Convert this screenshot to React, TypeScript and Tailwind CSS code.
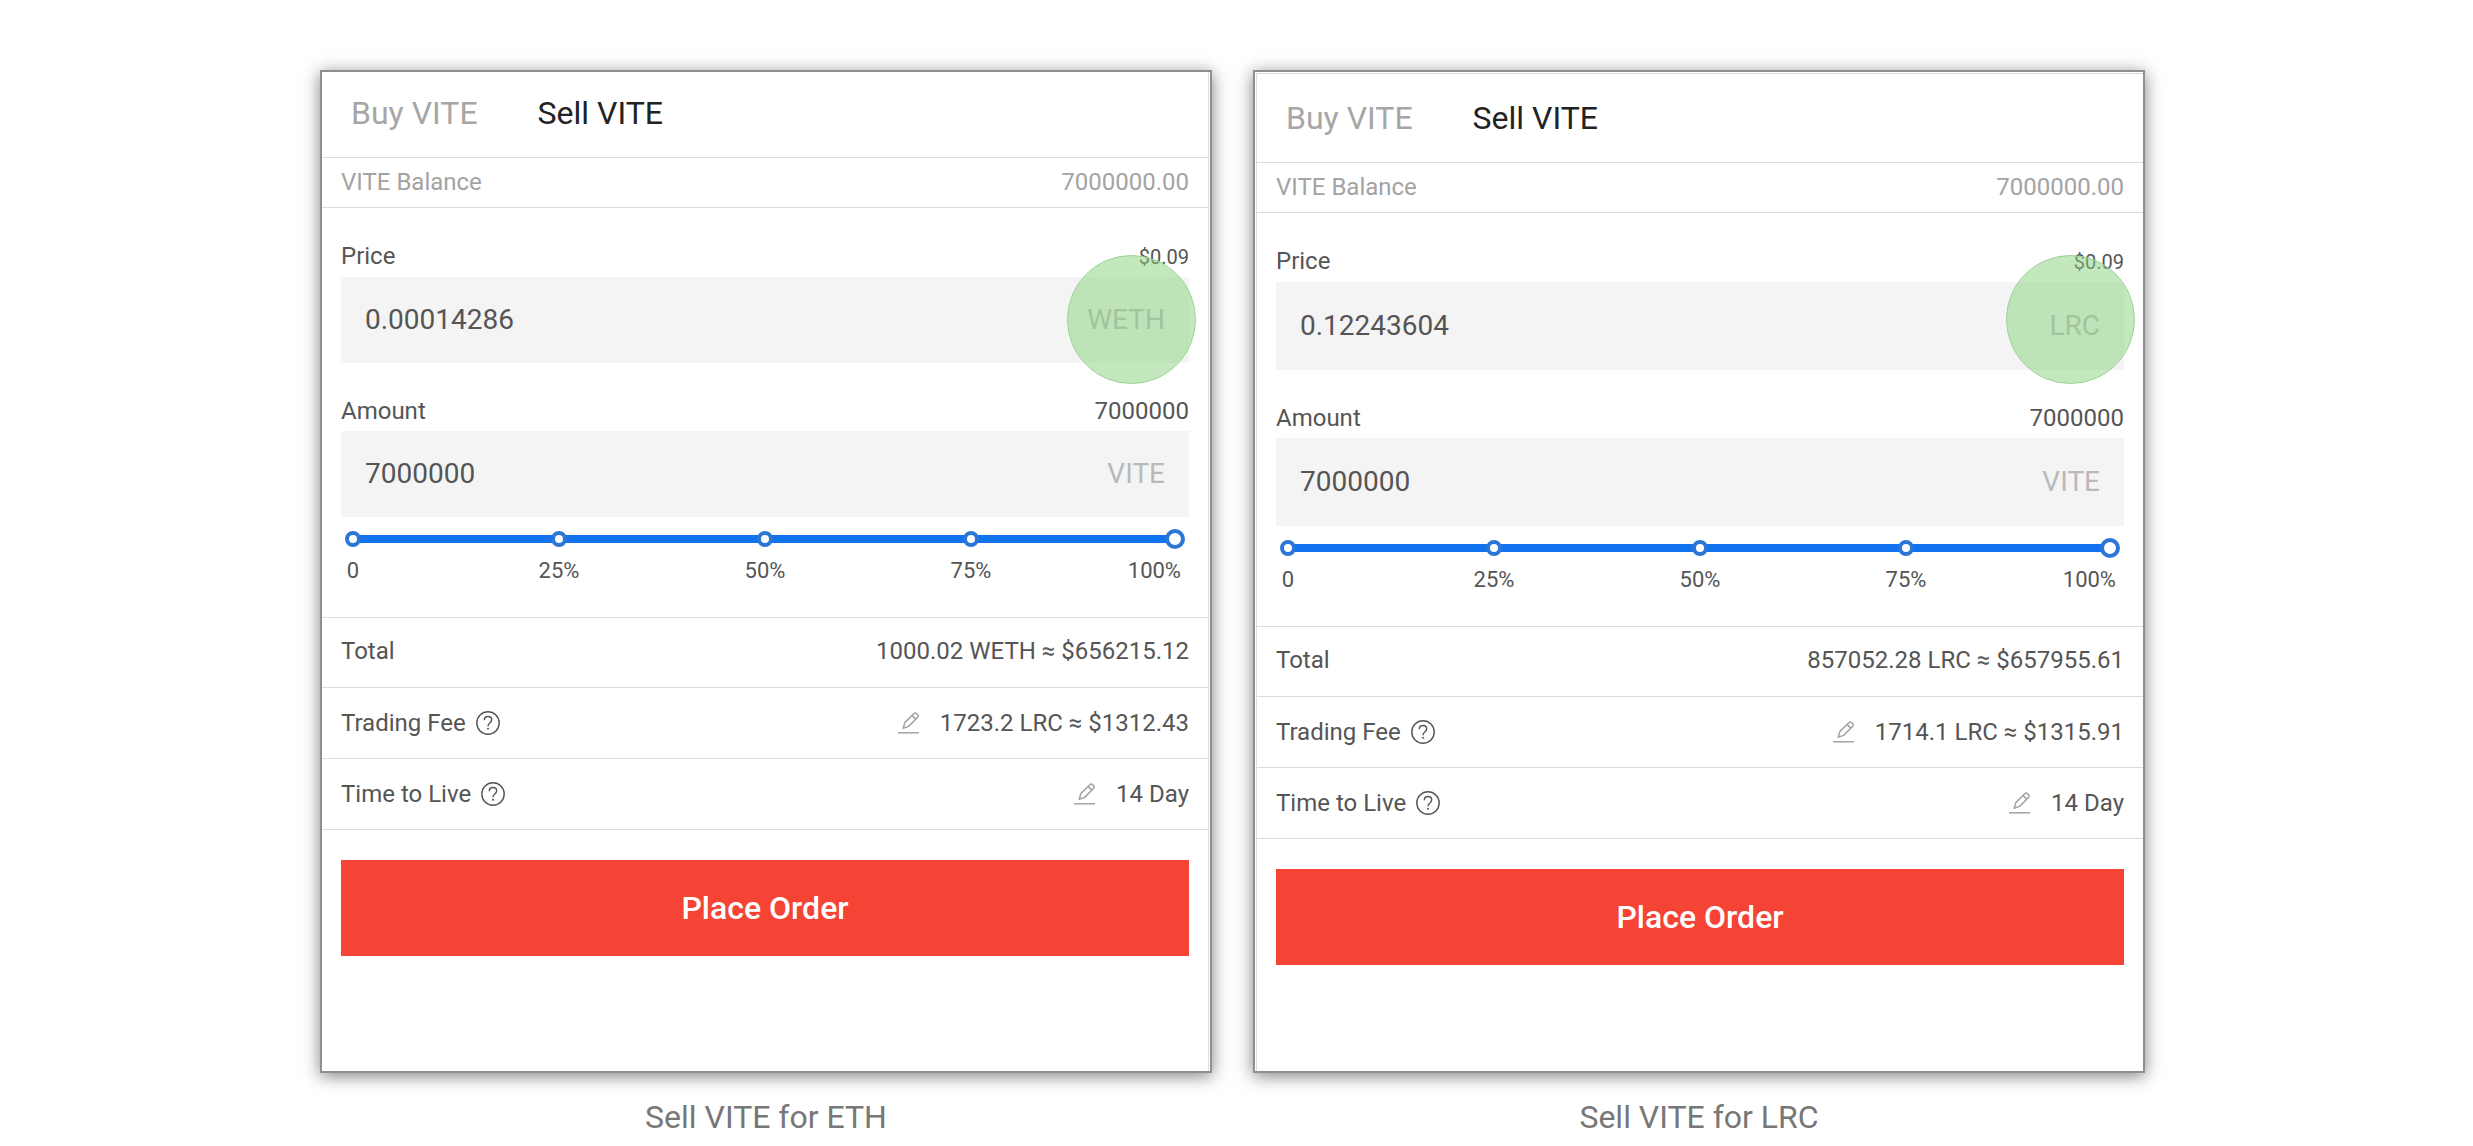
import React, { useState } from "react";

interface Order {
  id: string;
  unit: string;
  price: string;
  total: string;
  fee: string;
  caption: string;
  panelClass: string;
  tabsClass: string;
  fieldClass: string;
  markerClass: string;
}

const orders: Order[] = [
  {
    id: "eth",
    unit: "WETH",
    price: "0.00014286",
    total: "1000.02 WETH ≈ $656215.12",
    fee: "1723.2 LRC ≈ $1312.43",
    caption: "Sell VITE for ETH",
    panelClass: "mr-px border-r",
    tabsClass: "pt-[21px]",
    fieldClass: "h-[86px]",
    markerClass: "right-3.5",
  },
  {
    id: "lrc",
    unit: "LRC",
    price: "0.12243604",
    total: "857052.28 LRC ≈ $657955.61",
    fee: "1714.1 LRC ≈ $1315.91",
    caption: "Sell VITE for LRC",
    panelClass: "ml-px border-l mt-px border-t",
    tabsClass: "pt-6",
    fieldClass: "h-[88px]",
    markerClass: "right-2",
  },
];

const marks = ["0", "25%", "50%", "75%", "100%"];

function HelpIcon() {
  return (
    <svg className="size-6" viewBox="0 0 24 24" fill="none" stroke="#555" strokeWidth="1.4">
      <circle cx="12" cy="12" r="11.2" />
      <path d="M8.300 9.200c0-2.200 1.500-3.700 3.700-3.700s3.700 1.300 3.700 3.300c0 1.500-.8 2.300-1.900 3.200-1.200.9-1.800 1.600-1.800 3.200" />
      <circle cx="12" cy="17.800" r="1" fill="#555" stroke="none" />
    </svg>
  );
}

function EditIcon() {
  return (
    <svg className="size-[22px]" viewBox="0 0 22 22" fill="none" stroke="#a3a3a3" strokeWidth="1.5" strokeLinejoin="round">
      <path d="M5.200 16.200l1.600-5.600 9-8.900a2 2 0 0 1 2.800 0l.9.900a2 2 0 0 1 0 2.800l-8.900 9z" />
      <path d="M14.200 3.600l3.500 3.500" />
      <path d="M0 20.800h21" />
    </svg>
  );
}

interface FieldProps {
  id: string;
  label: string;
  hint: string;
  hintClass: string;
  unit: string;
  value: string;
  heightClass: string;
  onChange: (value: string) => void;
}

function Field({ id, label, hint, hintClass, unit, value, heightClass, onChange }: FieldProps) {
  return (
    <div className="pt-8">
      <div className="flex items-baseline justify-between pb-1 leading-8">
        <label htmlFor={id}>{label}</label>
        <span className={hintClass}>{hint}</span>
      </div>
      <div className={`flex items-center bg-[#f4f4f4] px-6 text-[28px] ${heightClass}`}>
        <input
          id={id}
          type="text"
          className="min-w-0 flex-1 bg-transparent outline-none"
          value={value}
          onChange={(e) => onChange(e.target.value)}
        />
        <span className="text-[#b9b9b9]">{unit}</span>
      </div>
    </div>
  );
}

function OrderCard({ order }: { order: Order }) {
  const [price, setPrice] = useState(order.price);
  const [amount, setAmount] = useState("7000000");
  const [percent, setPercent] = useState(100);

  return (
    <figure className="flex min-w-0 flex-col">
      <div className="relative flex flex-1 border-2 border-[#8f8f8f] bg-white shadow-[0_3px_16px_rgba(0,0,0,0.5)]">
        <div className={`min-w-0 flex-1 border-[#ddd] pb-[106px] ${order.panelClass}`}>
          {/* Tabs */}
          <div className={`flex gap-[60px] border-b border-[#ddd] px-[29px] pb-6 text-[32px] leading-10 ${order.tabsClass}`}>
            <button type="button" className="text-[#a6a6a6]">Buy VITE</button>
            <button type="button" className="text-[#222]">Sell VITE</button>
          </div>

          {/* Balance */}
          <div className="flex justify-between border-b border-[#ddd] px-[19px] pt-2 pb-[9px] leading-8 text-[#a3a3a3]">
            <span>VITE Balance</span>
            <span>7000000.00</span>
          </div>

          <div className="border-b border-[#ddd] px-[19px] pb-[34px]">
            <Field
              id={`${order.id}-price`}
              label="Price"
              hint="$0.09"
              hintClass="text-xl leading-8"
              unit={order.unit}
              value={price}
              heightClass={order.fieldClass}
              onChange={setPrice}
            />
            <Field
              id={`${order.id}-amount`}
              label="Amount"
              hint="7000000"
              hintClass=""
              unit="VITE"
              value={amount}
              heightClass={order.fieldClass}
              onChange={setAmount}
            />

            {/* Slider */}
            <div className="relative mt-3 flex h-5 items-center px-3">
              <div className="h-2 w-full bg-[#1173ee]" />
              <div className="absolute inset-x-3 flex justify-between">
                {marks.slice(0, 4).map((mark) => (
                  <span key={mark} className="flex w-0 justify-center">
                    <span className="size-4 shrink-0 rounded-full border-4 border-[#2b76d6] bg-white" />
                  </span>
                ))}
                <span className="w-0" />
              </div>
              <input
                type="range"
                min={0}
                max={100}
                aria-label="Amount percentage"
                className="absolute inset-x-1 h-5 cursor-pointer appearance-none bg-transparent [&::-webkit-slider-thumb]:size-5 [&::-webkit-slider-thumb]:appearance-none [&::-webkit-slider-thumb]:rounded-full [&::-webkit-slider-thumb]:border-4 [&::-webkit-slider-thumb]:border-[#2b76d6] [&::-webkit-slider-thumb]:bg-white"
                value={percent}
                onChange={(e) => setPercent(Number(e.target.value))}
              />
            </div>
            <div className="mt-2.5 flex justify-between px-3 text-[22px] leading-6">
              {marks.map((mark) => (
                <span key={mark} className="flex w-0 justify-center last:-mr-1 last:w-1 last:justify-end">
                  {mark}
                </span>
              ))}
            </div>
          </div>

          {/* Summary */}
          <div className="flex justify-between border-b border-[#ddd] px-[19px] pt-[17px] pb-5 leading-8">
            <span>Total</span>
            <span>{order.total}</span>
          </div>
          <div className="flex h-[71px] items-center justify-between border-b border-[#ddd] px-[19px]">
            <span className="flex items-center gap-2.5">
              Trading Fee
              <HelpIcon />
            </span>
            <span className="flex items-center gap-5">
              <button type="button" aria-label="Edit trading fee">
                <EditIcon />
              </button>
              {order.fee}
            </span>
          </div>
          <div className="flex h-[71px] items-center justify-between border-b border-[#ddd] px-[19px]">
            <span className="flex items-center gap-2.5">
              Time to Live
              <HelpIcon />
            </span>
            <span className="flex items-center gap-5">
              <button type="button" aria-label="Edit time to live">
                <EditIcon />
              </button>
              14 Day
            </span>
          </div>

          <div className="px-[19px] pt-[30px]">
            <button type="button" className="block h-24 w-full bg-[#f54336] text-[32px] font-medium text-white">
              Place Order
            </button>
          </div>
        </div>

        {/* Highlight over the quote currency */}
        <div
          className={`pointer-events-none absolute top-[183px] size-[129px] rounded-full border border-[#9dd397] bg-[#87d17d]/50 ${order.markerClass}`}
        />
      </div>
      <figcaption className="mt-6 text-center text-[32px] leading-10 text-[#777]">
        {order.caption}
      </figcaption>
    </figure>
  );
}

export default function App() {
  return (
    <main className="grid grid-cols-2 gap-[41px] bg-white pt-[70px] pr-[328px] pb-2.5 pl-[320px] font-[Roboto,sans-serif] text-2xl text-[#555]">
      {orders.map((order) => (
        <OrderCard key={order.id} order={order} />
      ))}
    </main>
  );
}
